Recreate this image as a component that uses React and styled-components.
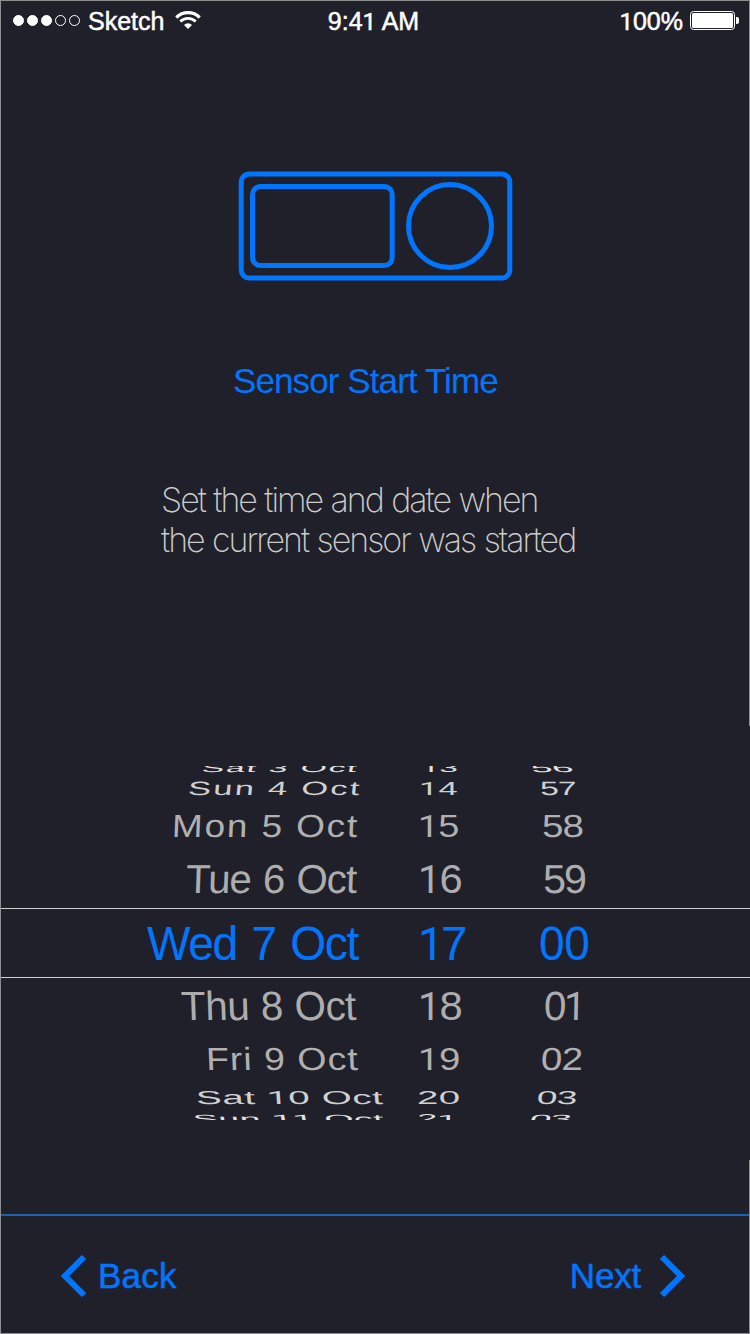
import React from "react";
import styled, { createGlobalStyle } from "styled-components";

const BLUE = "#0076ff";
const BG = "#20202a";

const GlobalStyle = createGlobalStyle`
  * { box-sizing: border-box; }
  body {
    margin: 0;
    background: ${BG};
    font-family: "Liberation Sans", Arial, sans-serif;
  }
`;

const Screen = styled.div`
  display: flex;
  flex-direction: column;
  width: 750px;
  height: 1334px;
  border: 1px solid #8d8f8f;
  background: ${BG};
`;

const StatusBar = styled.header`
  display: grid;
  grid-template-columns: 1fr auto 1fr;
  align-items: center;
  height: 39px;
  padding: 0 10px 0 12px;
  color: #fff;
  font-size: 25px;
  line-height: 37px;
  white-space: nowrap;
  -webkit-text-stroke: 0.5px #fff;
`;

const StatusText = styled.span`
  padding-top: 2px;
  margin-right: ${(p) => p.$nudge || 0}px;
`;

const StatusGroup = styled.div`
  display: flex;
  align-items: center;
  justify-content: ${(p) => (p.$end ? "flex-end" : "flex-start")};
`;

const Signal = styled.div`
  display: flex;
  gap: 3px;
  margin-right: 8px;
`;

const SignalDot = styled.i`
  width: 11px;
  height: 11px;
  border: 1px solid #fff;
  border-radius: 50%;
  background: ${(p) => (p.$on ? "#fff" : "transparent")};
`;

const WifiIcon = styled.svg`
  margin-left: 11px;
`;

const BatteryIcon = styled.svg`
  margin-left: 7px;
`;

const Intro = styled.main`
  display: flex;
  flex-direction: column;
  height: 686px;
  padding-top: 130px;
`;

const DeviceIcon = styled.svg`
  display: block;
  margin-left: 236px;
`;

const Title = styled.h1`
  margin: 79px 0 0 232px;
  color: ${BLUE};
  font-size: 35px;
  font-weight: 400;
  line-height: 40px;
  letter-spacing: -0.9px;
`;

const Description = styled.p`
  margin: 79px 0 0 160px;
  color: #cbcbc9;
  font-family: Inter, "Liberation Sans", sans-serif;
  font-size: 34px;
  font-weight: 200;
  line-height: 40px;
  letter-spacing: -2px;
  word-spacing: 0.8px;
  white-space: nowrap;
`;

const Picker = styled.section`
  height: 434px;
  margin-right: -1px;
  padding-top: 40px;
  background: ${BG};
`;

const Wheel = styled.div`
  height: 354px;
  overflow: hidden;
`;

const WheelRow = styled.div`
  display: grid;
  grid-template-columns: 400px 120px 1fr;
  align-items: center;
  height: ${(p) => p.$h}px;
  margin-top: ${(p) => p.$shift || 0}px;
  color: ${(p) => p.$color};
  ${(p) =>
    p.$selected &&
    `
    padding-top: 2px;
    border-top: 1px solid #cfcfcf;
    border-bottom: 1px solid #cfcfcf;
  `}
`;

const WheelText = styled.span`
  justify-self: start;
  height: 48px;
  margin: -24px 0 -24px ${(p) => p.$x}px;
  font-size: 48px;
  line-height: 48px;
  letter-spacing: ${(p) => p.$ls}px;
  word-spacing: ${(p) => p.$ws || 0}px;
  white-space: nowrap;
  transform-origin: 0 50%;
  transform: scale(${(p) => p.$sx}, ${(p) => p.$sy}) skewX(${(p) => p.$skew || 0}deg);
`;

const PlainOne = styled.span`
  font-family: Roboto, sans-serif;
  font-size: 0.967em;
  line-height: 0;
`;

const Footer = styled.nav`
  display: flex;
  justify-content: space-between;
  align-items: center;
  height: 119px;
  margin-top: 54px;
  padding: 2px 64px 0 59px;
  border-top: 2px solid #1b62b3;
`;

const NavButton = styled.button`
  display: flex;
  align-items: center;
  gap: ${(p) => p.$gap}px;
  padding: 0;
  border: 0;
  background: none;
  color: ${BLUE};
  font: 35px/40px "Liberation Sans", Arial, sans-serif;
  letter-spacing: ${(p) => p.$ls || 0}px;
  -webkit-text-stroke: 0.5px ${BLUE};
`;

// The numeral one is set in a face whose glyph has no foot serif.
const Numerals = ({ text }) =>
  text.split(/(1)/).map((part, i) => (part === "1" ? <PlainOne key={i}>1</PlainOne> : part));

const Chevron = ({ flip }) => (
  <svg width="27" height="42" viewBox="0 0 27 42" fill="none" stroke={BLUE} strokeWidth="6">
    <path d={flip ? "M4 2L23 21L4 40" : "M24 2L5 21L24 40"} />
  </svg>
);

// Each cell: [text, left offset in column, horizontal scale, letter spacing, skew, word spacing]
const rows = [
  { h: 22.4, shift: -9.4, sy: 0.25, color: "#e2e2e2", cells: [["Sat 3 Oct", 202, 0.7, 2.6, -5], ["13", 21, 0.7, 0, 0], ["56", 11, 0.8, -0.5, 6]] },
  { h: 19, sy: 0.4, color: "#d0d0d0", cells: [["Sun 4 Oct", 187.5, 0.72, 3.1, -3], ["14", 19, 0.72, 1, 0], ["57", 19.5, 0.7, -1, 2]] },
  { h: 56.6, sy: 0.667, color: "#b0b0b0", cells: [["Mon 5 Oct", 172, 0.77, 2.4, -2], ["15", 18, 0.79, -0.5, 0], ["58", 22, 0.8, -0.9, 1]] },
  { h: 50.8, sy: 0.84, color: "#adadad", cells: [["Tue 6 Oct", 186, 0.84, -1.2, -2, 2.2], ["16", 18, 0.87, -1.5, 0], ["59", 23, 0.86, -2.2, 1]] },
  { h: 70, shift: 2.6, sy: 1, color: BLUE, selected: true, cells: [["Wed 7 Oct", 146.5, 0.96, -1.4, 0, 3.2], ["17", 17.5, 0.99, -2.8, 0], ["00", 19, 0.96, -0.5, 0]] },
  { h: 55.4, sy: 0.85, color: "#adadad", cells: [["Thu 8 Oct", 180.5, 0.84, -0.5, 2, 1], ["18", 18, 0.87, -1.5, 0], ["01", 23.5, 0.84, -3, -1]] },
  { h: 51.8, sy: 0.667, color: "#b0b0b0", cells: [["Fri 9 Oct", 206, 0.78, 1.3, 2], ["19", 18, 0.8, 0, 0], ["02", 21, 0.8, -0.8, -2]] },
  { h: 25, sy: 0.39, color: "#d0d0d0", cells: [["Sat 10 Oct", 196, 0.8, 0.8, 2], ["20", 16.5, 0.8, 0.5, 0], ["03", 16.5, 0.77, -0.8, -3]] },
  { h: 17.6, sy: 0.25, color: "#e2e2e2", cells: [["Sun 11 Oct", 193, 0.78, 0.6, 4], ["21", 16.5, 0.76, 0, 0], ["03", 10, 0.8, -1.5, -6]] },
];

export default function App() {
  return (
    <>
      <GlobalStyle />
      <Screen>
        <StatusBar>
          <StatusGroup>
            <Signal>
              {[1, 1, 1, 0, 0].map((on, i) => (
                <SignalDot key={i} $on={on} />
              ))}
            </Signal>
            <StatusText>Sketch</StatusText>
            <WifiIcon width="26" height="19" viewBox="0 0 26 19" fill="none" stroke="#fff">
              <path d="M1.3 6.5A16.6 16.6 0 0 1 24.7 6.5" strokeWidth="3.2" />
              <path d="M5.3 10.6A10.9 10.9 0 0 1 20.7 10.6" strokeWidth="2.8" />
              <path d="M13 18L9 14A5.7 5.7 0 0 1 17 14Z" fill="#fff" stroke="none" />
            </WifiIcon>
          </StatusGroup>
          <StatusText $nudge={5}>
            <Numerals text="9:41 AM" />
          </StatusText>
          <StatusGroup $end>
            <StatusText>
              <Numerals text="100%" />
            </StatusText>
            <BatteryIcon width="49" height="19" viewBox="0 0 49 19">
              <rect x="0.5" y="0.5" width="44" height="18" rx="3" fill="none" stroke="#fff" />
              <rect x="2" y="2" width="41" height="15" rx="1.5" fill="#fff" />
              <path d="M46 6h1q2 0 2 2v3q0 2-2 2h-1z" fill="#fff" />
            </BatteryIcon>
          </StatusGroup>
        </StatusBar>
        <Intro>
          <DeviceIcon width="278" height="112" viewBox="237 170 278 112" fill="none" stroke={BLUE} strokeWidth="5">
            <rect x="241.2" y="174" width="268.6" height="104" rx="8" />
            <rect x="252.5" y="186.5" width="139.7" height="79" rx="8" />
            <circle cx="450" cy="226" r="41.5" />
          </DeviceIcon>
          <Title>Sensor Start Time</Title>
          <Description>
            Set the time and date when
            <br />
            the current sensor was started
          </Description>
        </Intro>
        <Picker>
          <Wheel>
            {rows.map((row, i) => (
              <WheelRow key={i} $h={row.h} $shift={row.shift} $color={row.color} $selected={row.selected}>
                {row.cells.map(([text, x, sx, ls, skew, ws], j) => (
                  <WheelText key={j} $x={x - 1} $sx={sx} $sy={row.sy} $ls={ls} $skew={skew} $ws={ws}>
                    <Numerals text={text} />
                  </WheelText>
                ))}
              </WheelRow>
            ))}
          </Wheel>
        </Picker>
        <Footer>
          <NavButton $gap={11} $ls={0.2}>
            <Chevron />
            Back
          </NavButton>
          <NavButton $gap={17} $ls={-0.2}>
            Next
            <Chevron flip />
          </NavButton>
        </Footer>
      </Screen>
    </>
  );
}
